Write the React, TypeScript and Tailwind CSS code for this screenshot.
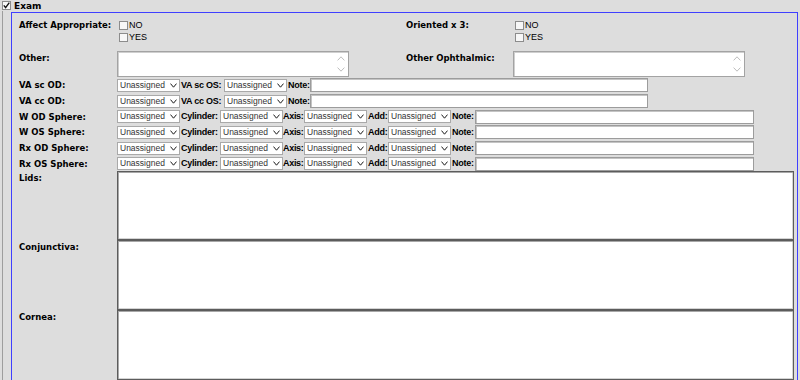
import React from "react";

function Sel() {
  return (
    <div className="flex h-[13px] w-[63px] shrink-0 items-center justify-between border border-[#a9a9a9] bg-white pl-[2px] pr-[2px] font-['Liberation_Sans',sans-serif] text-[8.5px] font-normal leading-none text-[#333333]">
      <span>Unassigned</span>
      <svg width="7" height="5" viewBox="0 0 7 5" className="shrink-0">
        <path d="M0.5 0.6 L3.5 4.2 L6.5 0.6" fill="none" stroke="#1a1a1a" strokeWidth="1" />
      </svg>
    </div>
  );
}

function Box({ checked }: { checked?: boolean }) {
  return (
    <svg width="9" height="9" viewBox="0 0 9 9" className="shrink-0">
      <rect x="0.5" y="0.5" width="8" height="8" fill="#f7f7f7" stroke="#8c8c8c" />
      {checked ? (
        <path d="M1.8 4.4 L3.6 6.6 L7.3 1.6" fill="none" stroke="#111" strokeWidth="1.4" />
      ) : null}
    </svg>
  );
}

function NoteInput({ w }: { w: string }) {
  return (
    <div
      className={
        w +
        " h-[14px] shrink-0 border border-[#9c9c9c] bg-white shadow-[inset_1px_1px_0_#c4c4c4]"
      }
    />
  );
}

function Choice({ label }: { label: string }) {
  return (
    <div className="flex h-[12px] items-center pl-[2px]">
      <Box />
      <span className="pl-[1px] font-['Liberation_Sans',sans-serif] text-[9px] font-normal leading-none text-black">
        {label}
      </span>
    </div>
  );
}

function SmallArea() {
  return (
    <div className="flex h-[26px] w-[232px] justify-end border border-[#a3a3a3] bg-white shadow-[inset_1px_1px_0_#cfcfcf]">
      <div className="flex flex-col justify-between py-[4px] pr-[3px]">
        <svg width="8" height="5" viewBox="0 0 8 5">
          <path d="M0.6 4.4 L4 0.8 L7.4 4.4" fill="none" stroke="#bdbdbd" strokeWidth="1" />
        </svg>
        <svg width="8" height="5" viewBox="0 0 8 5">
          <path d="M0.6 0.6 L4 4.2 L7.4 0.6" fill="none" stroke="#bdbdbd" strokeWidth="1" />
        </svg>
      </div>
    </div>
  );
}

const inl =
  "shrink-0 whitespace-nowrap pl-[1px] font-['Liberation_Sans',sans-serif] text-[9px] font-bold leading-none tracking-[-0.25px]";

function VaRow({ a, b, h }: { a: string; b: string; h: string }) {
  return (
    <div className={h + " flex items-center"}>
      <div className="w-[98px] shrink-0">{a}</div>
      <Sel />
      <div className={"w-[44px] " + inl}>{b}</div>
      <Sel />
      <div className={"w-[23px] " + inl}>Note:</div>
      <NoteInput w="w-[338px]" />
    </div>
  );
}

function RxRow({ a, h }: { a: string; h: string }) {
  return (
    <div className={h + " flex items-center"}>
      <div className="w-[98px] shrink-0">{a}</div>
      <Sel />
      <div className={"w-[40px] " + inl}>Cylinder:</div>
      <Sel />
      <div className="w-[21px] shrink-0 whitespace-nowrap font-['Liberation_Sans',sans-serif] text-[9px] font-bold leading-none tracking-[-0.3px]">
        Axis:
      </div>
      <Sel />
      <div className={"w-[21px] " + inl}>Add:</div>
      <Sel />
      <div className={"w-[24px] " + inl}>Note:</div>
      <NoteInput w="w-[279px]" />
    </div>
  );
}

function BigRow({ label, h }: { label: string; h: string }) {
  return (
    <div className={h + " flex"}>
      <div className="w-[98px] shrink-0 pt-[1px]">{label}</div>
      <div className="h-full w-[677px] border border-[#5c5c5c] bg-white shadow-[inset_1px_1px_0_#a8a8a8,inset_-1px_-1px_0_#d4d4d4]" />
    </div>
  );
}

export default function App() {
  return (
    <div className="h-[380px] w-[800px] overflow-hidden bg-[#dddddd] font-['DejaVu_Sans',sans-serif] text-[8.5px] font-bold leading-[12px] text-black">
      <div className="flex h-[11px] items-start pl-[2px] pt-[1px]">
        <Box checked />
        <span className="pl-[3px] text-[9px] leading-[10px]">Exam</span>
      </div>
      <div className="ml-[2px] border-l border-[#9d9d9d] pl-[8px] pt-[1px]">
        <div className="h-[400px] w-[787px] border border-[#3f3fff] pl-[7px] pt-[6px]">
          <div className="grid grid-cols-[98px_289px_107px_1fr]">
            <div>Affect Appropriate:</div>
            <div>
              <Choice label="NO" />
              <Choice label="YES" />
            </div>
            <div>Oriented x 3:</div>
            <div>
              <Choice label="NO" />
              <Choice label="YES" />
            </div>
          </div>
          <div className="mt-[8px] grid grid-cols-[98px_289px_107px_1fr]">
            <div className="pt-[1px]">Other:</div>
            <div>
              <SmallArea />
            </div>
            <div className="pt-[1px]">Other Ophthalmic:</div>
            <div>
              <SmallArea />
            </div>
          </div>
          <div className="flex flex-col">
            <VaRow a="VA sc OD:" b="VA sc OS:" h="h-[16px]" />
            <VaRow a="VA cc OD:" b="VA cc OS:" h="h-[16px]" />
            <RxRow a="W OD Sphere:" h="h-[15px]" />
            <RxRow a="W OS Sphere:" h="h-[16px]" />
            <RxRow a="Rx OD Sphere:" h="h-[16px]" />
            <RxRow a="Rx OS Sphere:" h="h-[15px]" />
          </div>
          <div className="flex flex-col">
            <BigRow label="Lids:" h="h-[69px]" />
            <BigRow label="Conjunctiva:" h="h-[70px]" />
            <BigRow label="Cornea:" h="h-[70px]" />
          </div>
        </div>
      </div>
    </div>
  );
}
